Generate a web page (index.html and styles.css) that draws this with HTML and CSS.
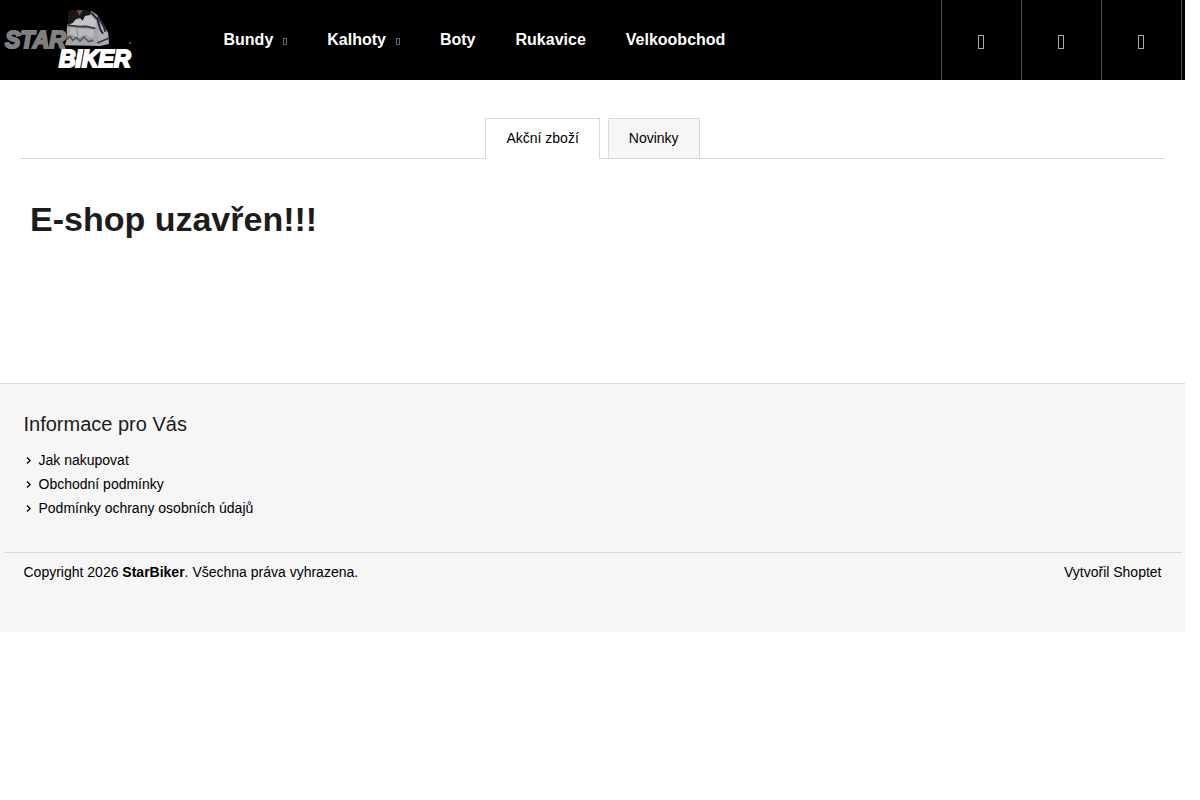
FILE: index.html
```html
<!DOCTYPE html>
<html lang="cs">
<head>
    <meta charset="UTF-8">
    <meta name="viewport" content="width=device-width, initial-scale=1.0">
    <title>StarBiker</title>
    <link rel="stylesheet" href="styles.css">
</head>
<body>
    <header class="header">
        <div class="container header-in">
            <a href="#" class="logo">
                <svg width="132" height="66" viewBox="0 0 132 66" role="img" aria-label="StarBiker">
                    <text class="logo-star" x="1" y="42">STAR</text>
                    <!-- jacket -->
                    <g transform="translate(56 -1) scale(.3333)">
                        <path d="M22 60l8-15 20-5 12-22 33 0 17 12 16 25 17 30 2 32-27 6-105-2 7-26-2-20z" fill="#a4a6ab"/>
                        <path d="M28 48l28-4 20-12 18 0 14 16-2 20-30-3-50-5z" fill="#c2c4c8"/>
                        <path d="M32 70l36 2 32 2 2 18-20 12-36-8-16-8z" fill="#b8babe"/>
                        <path d="M124 52l18 32 2 24-22 8-8-30 2-16z" fill="#b0b2b8"/>
                        <path d="M24 61l36 4 18-1 28 6" fill="none" stroke="#33353f" stroke-width="5"/>
                        <path d="M95 24l18 20 8 30 8 12M114 34l18 32 4 14" fill="none" stroke="#262833" stroke-width="6"/>
                        <path d="M112 114l34-14" fill="none" stroke="#33353f" stroke-width="5"/>
                        <path d="M50 66l4 30M34 92l22 8 22-8 20 14" fill="none" stroke="#85878c" stroke-width="3"/>
                        <path d="M20 104l10-10 8 12 12-8 10 10 12-12 14 14 14-4" fill="none" stroke="#55575c" stroke-width="5"/>
                        <path d="M26 18l14-4 35 0 20 5-4 10-16 4-7 14-8-8-12 3-9 11-14 7-2-16z" fill="#1e1516"/>
                        <path d="M50 16l18 0-10 16z" fill="#6e4c44"/>
                    </g>
                    <text class="logo-biker" x="55" y="61">BIKER</text>
                    <circle cx="126" cy="37" r="1" fill="#666"/>
                </svg>
            </a>
            <nav class="menu">
                <a href="#">Bundy <span class="menu-arrow"></span></a>
                <a href="#">Kalhoty <span class="menu-arrow"></span></a>
                <a href="#">Boty</a>
                <a href="#">Rukavice</a>
                <a href="#">Velkoobchod</a>
            </nav>
            <div class="buttons">
                <button type="button" aria-label="Hledat"><span class="glyph"></span></button>
                <button type="button" aria-label="Přihlášení"><span class="glyph"></span></button>
                <button type="button" aria-label="Nákupní košík"><span class="glyph"></span></button>
            </div>
        </div>
    </header>

    <main class="content">
        <div class="tabs">
            <a href="#akce" class="tab active">Akční zboží</a>
            <a href="#novinky" class="tab">Novinky</a>
        </div>
        <h1>E-shop uzavřen!!!</h1>
    </main>

    <footer class="footer">
        <div class="container">
            <div class="footer-info">
                <h4>Informace pro Vás</h4>
                <ul>
                    <li><svg class="chevron" width="6" height="8" viewBox="0 0 6 8"><path d="M1 1.5l3 3-3 3"/></svg><a href="#">Jak nakupovat</a></li>
                    <li><svg class="chevron" width="6" height="8" viewBox="0 0 6 8"><path d="M1 1.5l3 3-3 3"/></svg><a href="#">Obchodní podmínky</a></li>
                    <li><svg class="chevron" width="6" height="8" viewBox="0 0 6 8"><path d="M1 1.5l3 3-3 3"/></svg><a href="#">Podmínky ochrany osobních údajů</a></li>
                </ul>
            </div>
            <div class="footer-bottom">
                <span>Copyright 2026 <strong>StarBiker</strong>. Všechna práva vyhrazena.</span>
                <a href="#">Vytvořil Shoptet</a>
            </div>
        </div>
    </footer>
</body>
</html>
```
FILE: styles.css
```css
*{box-sizing: border-box;}
body{margin:0;padding-right:15px;background:#fff;color:#000;font-family:"Liberation Sans", Arial, sans-serif;font-size:14px;line-height:20px;}
a{color:inherit;text-decoration: none;}
h1,h4,ul{margin:0;padding:0;}
.container{max-width:1178px;margin:0 auto;}

/* header */
.header{background:#000;color:#fff;}
.header-in{display:flex;height:80px;}
.logo{width:200px;padding-top:6px;}
.logo svg{display:block;}
.logo-star,.logo-biker{font-family:"Liberation Sans", Arial, sans-serif;font-weight:bold;font-style:italic;font-size:23px;stroke-width:2px;}
.logo-star{fill:#808080;stroke:#808080;}
.logo-biker{fill:#fff;stroke:#fff;}
.menu{display:flex;flex:1;}
.menu a{display:flex;align-items:center;gap:10px;padding:0 20px;font-size:16px;font-weight:bold;}
.menu-arrow{width:4px;height:7px;margin-top:3px;border:1px solid #666;}
.buttons{display:flex;border-right:1px solid #4d4d4d;}
.buttons button{display:flex;align-items:center;justify-content:center;width:80px;padding:4px 0 0;background:none;border:0;border-left:1px solid #4d4d4d;cursor:pointer;}
.glyph{width:6px;height:14px;border:1px solid #aaa;}

/* content */
.content{padding:38px 20px 144px;}
.tabs{display:flex;justify-content:center;gap:8px;border-bottom:1px solid #d9d9d9;}
.tab{height:40px;padding:9px 20px;background:#f6f6f6;border:1px solid #d9d9d9;border-bottom:0;}
.tab.active{height:41px;margin-bottom:-1px;background:#fff;}
.content h1{padding:40px 10px 0;font-size:34px;line-height:40px;color:#1c1c1c;}

/* footer */
.footer{background:#f6f6f6;border-top:1px solid #d9d9d9;}
.footer-info{padding:28px 20px 32px;}
.footer-info h4{margin-bottom:12px;font-size:20px;line-height:24px;font-weight:normal;color:#1c1c1c;}
.footer-info li{display:flex;align-items:center;gap:7px;padding-left:2px;line-height:24px;}
.chevron{fill:none;stroke:#000;stroke-width:1.4;}
.footer-bottom{display:flex;justify-content:space-between;padding:9px 20px 50px;border-top:1px solid #d9d9d9;}
```
